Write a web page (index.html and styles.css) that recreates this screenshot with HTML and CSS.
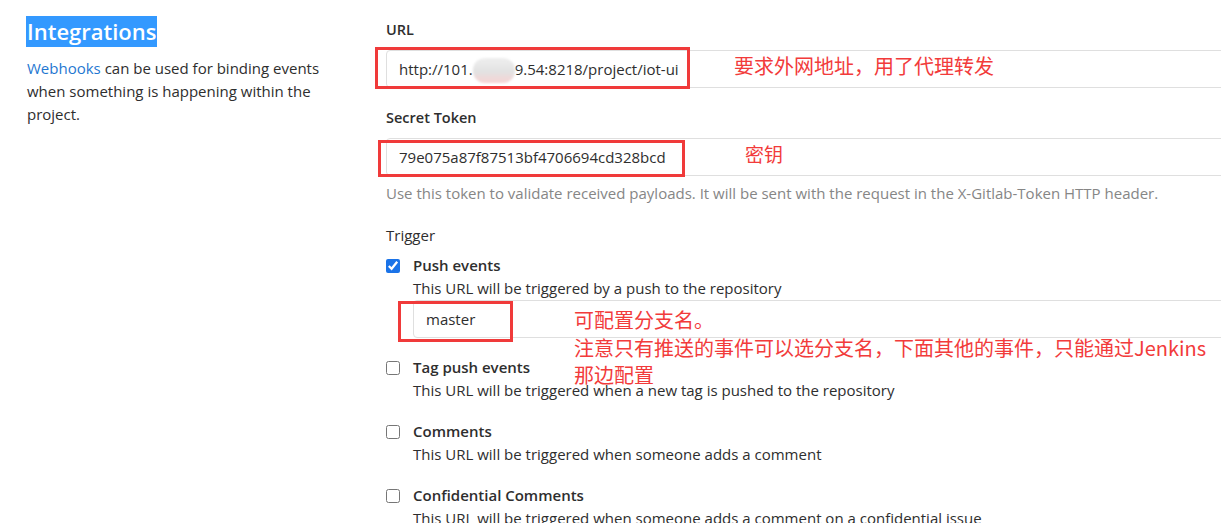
FILE: index.html
```html
<!DOCTYPE html>
<html lang="en">
<head>
<meta charset="utf-8">
<title>Integrations</title>
<link rel="stylesheet" href="styles.css">
</head>
<body>
<div class="page">
  <aside class="intro">
    <h4 class="title"><span class="sel">Integrations</span></h4>
    <p class="lead"><a class="link" href="#">Webhooks</a> can be used for binding events when something is happening within the project.</p>
  </aside>

  <main class="form">
    <div class="group">
      <div class="label">URL</div>
      <div class="field-wrap">
        <div class="input"><span>http://101.</span><span class="blur"></span><span>9.54:8218/project/iot-ui</span></div>
        <span class="mark mark-url"></span>
        <span class="note note-url">要求外网地址，用了代理转发</span>
      </div>
    </div>

    <div class="group group-token">
      <div class="label">Secret Token</div>
      <div class="field-wrap">
        <div class="input">79e075a87f87513bf4706694cd328bcd</div>
        <span class="mark mark-token"></span>
        <span class="note note-token">密钥</span>
      </div>
      <p class="help">Use this token to validate received payloads. It will be sent with the request in the X-Gitlab-Token HTTP header.</p>
    </div>

    <div class="trigger">
      <div class="trigger-label">Trigger</div>

      <div class="check">
        <input class="box" type="checkbox" checked>
        <div class="check-body">
          <div class="check-title">Push events</div>
          <div class="check-desc">This URL will be triggered by a push to the repository</div>
          <div class="field-wrap">
            <div class="input">master</div>
            <span class="mark mark-branch"></span>
            <span class="note note-branch">可配置分支名。<br>注意只有推送的事件可以选分支名，下面其他的事件，只能通过Jenkins<br>那边配置</span>
          </div>
        </div>
      </div>

      <div class="check">
        <input class="box" type="checkbox">
        <div class="check-body">
          <div class="check-title">Tag push events</div>
          <div class="check-desc">This URL will be triggered when a new tag is pushed to the repository</div>
        </div>
      </div>

      <div class="check">
        <input class="box" type="checkbox">
        <div class="check-body">
          <div class="check-title">Comments</div>
          <div class="check-desc">This URL will be triggered when someone adds a comment</div>
        </div>
      </div>

      <div class="check">
        <input class="box" type="checkbox">
        <div class="check-body">
          <div class="check-title">Confidential Comments</div>
          <div class="check-desc">This URL will be triggered when someone adds a comment on a confidential issue</div>
        </div>
      </div>
    </div>
  </main>
</div>
</body>
</html>
```
FILE: styles.css
```css
html, body {
  margin: 0;
  padding: 0;
  background: #ffffff;
}

body {
  overflow: hidden;
  font-family: "Open Sans", "Noto Sans", sans-serif;
  color: #2e2e2e;
}

.page {
  display: grid;
  grid-template-columns: 334px 900px;
  column-gap: 26px;
  padding: 16px 0 0 26px;
}

/* left column */
.title {
  margin: 0;
  font-size: 22px;
  font-weight: 600;
  line-height: 31px;
}

.sel {
  display: inline-block;
  height: 31px;
  padding: 0 1px;
  background: #3399ff;
  color: #ffffff;
}

.lead {
  margin: 10px 0 0;
  padding-left: 1px;
  width: 320px;
  font-size: 15px;
  line-height: 23px;
}

.link {
  color: #1f78d1;
  text-decoration: none;
}

/* right column */
.form {
  padding-top: 4px;
  font-size: 15px;
}

.group {
  margin-bottom: 20px;
}

.label {
  font-size: 14.5px;
  font-weight: 600;
  line-height: 20px;
  margin-bottom: 10px;
}

.field-wrap {
  position: relative;
}

.input {
  box-sizing: border-box;
  height: 38px;
  display: flex;
  align-items: center;
  padding: 0 12px;
  border: 1px solid #dfdfdf;
  border-radius: 4px;
  background: #ffffff;
  font-size: 15px;
  color: #2e2e2e;
  white-space: nowrap;
}

.blur {
  display: inline-block;
  width: 42px;
  height: 25px;
  margin-top: 2px;
  border-radius: 12px;
  background: linear-gradient(to bottom, #efefef 0%, #e2e2e2 55%, #f7d3d3 100%);
  filter: blur(1.2px);
}

.help {
  margin: 7px 0 0;
  line-height: 20px;
  color: #868686;
}

.group-token {
  margin-bottom: 22px;
}

.trigger-label {
  line-height: 20px;
  margin-bottom: 9px;
}

.check {
  display: grid;
  grid-template-columns: 14px 1fr;
  column-gap: 13px;
  margin-bottom: 18px;
}

.box {
  width: 14px;
  height: 14px;
  margin: 5px 0 0;
  accent-color: #1a73e8;
}

.check-title {
  font-weight: 600;
  line-height: 23px;
}

.check-desc {
  line-height: 23px;
}

/* annotations drawn over the form */
.mark {
  position: absolute;
  box-sizing: border-box;
  border: 3px solid #f03a3a;
}

.mark-url {
  left: -11px;
  top: -3px;
  width: 315px;
  height: 42px;
}

.mark-token {
  left: -8px;
  top: 2px;
  width: 307px;
  height: 37px;
}

.mark-branch {
  left: -15px;
  top: 1px;
  width: 115px;
  height: 41px;
}

.note {
  position: absolute;
  font-family: "Noto Sans CJK SC", "Open Sans", sans-serif;
  color: #f23b3b;
  white-space: nowrap;
}

.note-url {
  left: 348px;
  top: 2px;
  font-size: 20px;
  line-height: 28px;
}

.note-token {
  left: 359px;
  top: 2px;
  font-size: 19px;
  line-height: 28px;
}

.note-branch {
  left: 161px;
  top: 6px;
  font-size: 20px;
  line-height: 27.5px;
}
```
